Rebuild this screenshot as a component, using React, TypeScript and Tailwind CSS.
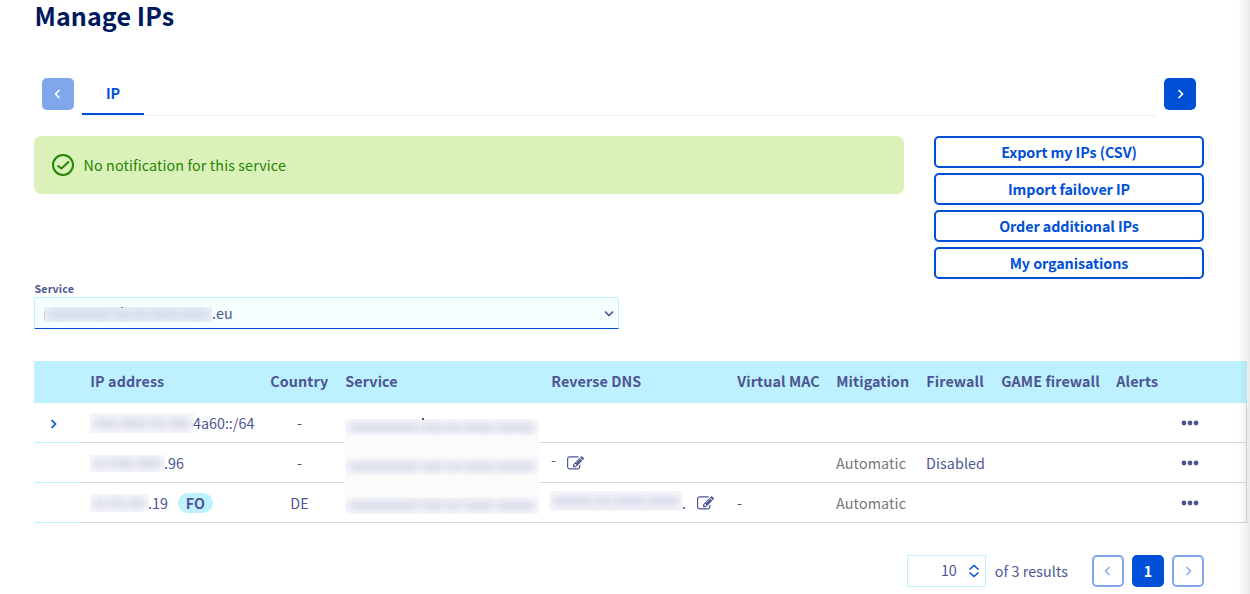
import type { ReactNode } from "react";

type ChevronProps = { className?: string; d?: string; strokeWidth?: number };

function Chevron({ className = "", d = "M6.5 4 10.5 8l-4 4", strokeWidth = 1.7 }: ChevronProps) {
  return (
    <svg viewBox="0 0 16 16" className={`size-4 shrink-0 ${className}`} fill="none" stroke="currentColor" strokeWidth={strokeWidth}>
      <path d={d} />
    </svg>
  );
}

const LEFT = "M9.5 4 5.5 8l4 4";

function EditIcon() {
  return (
    <svg viewBox="0 0 1792 1792" className="size-[17px] shrink-0" fill="currentColor">
      <path d="M888 1184l116-116-152-152-116 116v56h96v96h56zm440-720q-16-16-33 1l-350 350q-17 17-1 33t33-1l350-350q17-17 1-33zm80 594v190q0 119-84.500 203.500t-203.500 84.500h-832q-119 0-203.500-84.500t-84.500-203.500v-832q0-119 84.500-203.500t203.500-84.500h832q63 0 117 25 15 7 18 23 3 17-9 29l-49 49q-14 14-32 8-23-6-45-6h-832q-66 0-113 47t-47 113v832q0 66 47 113t113 47h832q66 0 113-47t47-113v-126q0-13 9-22l64-64q15-15 35-7t20 29zm-96-738l288 288-672 672h-288v-288zm444 132l-92 92-288-288 92-92q28-28 68-28t68 28l152 152q28 28 28 68t-28 68z" />
    </svg>
  );
}

function Dots() {
  return (
    <svg viewBox="0 0 18 6" className="-ml-px h-1.5 w-[18px]" fill="currentColor">
      <circle cx="3" cy="3" r="2.4" />
      <circle cx="9" cy="3" r="2.4" />
      <circle cx="15" cy="3" r="2.4" />
    </svg>
  );
}

function Redacted({ className, segments }: { className: string; segments: number[] }) {
  return (
    <span className={`flex shrink-0 items-center gap-0.5 overflow-hidden px-1 ${className}`}>
      {segments.map((grow, i) => (
        <span key={i} className="h-[9px] basis-0 bg-[#d3d6e8] blur-[4px]" style={{ flexGrow: grow }} />
      ))}
    </span>
  );
}

const actions = ["Export my IPs (CSV)", "Import failover IP", "Order additional IPs", "My organisations"];
const columns = "grid grid-cols-[47px_180px_75px_206px_186px_99px_90px_75px_115px_66px_74px]";
const headers = ["", "IP address", "Country", "Service", "Reverse DNS", "Virtual MAC", "Mitigation", "Firewall", "GAME firewall", "Alerts", ""];

type Row = {
  expand?: boolean;
  ip: ReactNode;
  country: string;
  dns?: ReactNode;
  mac?: string;
  mitigation?: string;
  firewall?: string;
};

const rows: Row[] = [
  {
    expand: true,
    ip: (<><Redacted className="h-5 w-[104px] bg-[#f8f8fb]" segments={[4, 5, 3, 4]} /><span className="-ml-px">4a60::/64</span></>),
    country: "-",
  },
  {
    ip: (<><Redacted className="h-[17px] w-[75px] bg-[#f8f8fb]" segments={[2, 4, 4]} /><span className="-ml-px">.96</span></>),
    country: "-",
    dns: (<><span className="relative -top-[3px] w-4">-</span><EditIcon /></>),
    mitigation: "Automatic",
    firewall: "Disabled",
  },
  {
    ip: (<><Redacted className="h-[18px] w-[59px] bg-[#f8f8fb]" segments={[2, 3, 3]} /><span className="-ml-px">.19</span><span className="ml-[10px] flex h-5 w-[35px] items-center justify-center rounded-full bg-[#bef1ff] font-bold"><span>FO</span></span></>),
    country: "DE",
    dns: (<><Redacted className="relative -top-0.5 -ml-[2px] h-5 w-[134px] bg-[#f8f8fb]" segments={[5, 2, 4, 4]} /><span className="relative -left-px w-[14px]">.</span><EditIcon /></>),
    mac: "-",
    mitigation: "Automatic",
  },
];

function IpTable() {
  return (
    <div className="relative mt-8 w-[1213px]">
      <div className={`${columns} h-[42px] items-center bg-[#bef1ff] pb-0.5 font-bold tracking-[0.1px]`}>
        {headers.map((h, i) => (
          <div key={i} className="pl-[9.300px] whitespace-nowrap">{h}</div>
        ))}
      </div>
      {rows.map((row, i) => (
        <div key={i} className={`${columns} h-10 border-r border-[#d9d9de] [&>div]:flex [&>div]:items-center [&>div]:border-b [&>div]:border-[#d9d9d9] [&>div]:pt-px [&>div]:pl-[9px]`}>
          <div className="border-[#bef1ff]!">{row.expand && <Chevron className="mt-px ml-0.5 text-[#0050d7]" />}</div>
          <div>{row.ip}</div>
          <div className="justify-center pr-[7px]">{row.country}</div>
          <div />
          <div>{row.dns}</div>
          <div>{row.mac}</div>
          <div className="tracking-[0.14px] text-[#757575]">{row.mitigation}</div>
          <div className="tracking-[0.1px]">{row.firewall}</div>
          <div />
          <div />
          <div><Dots /></div>
        </div>
      ))}
      <div className="absolute top-[58px] left-[311px] flex h-[95px] w-[194px] flex-col justify-between bg-[#fbfbfc]">
        {rows.map((_, i) => (
          <Redacted key={i} className="h-[17px] w-full" segments={[9, 3, 2, 4, 5]} />
        ))}
      </div>
      <span className="absolute top-[57px] left-[388px] h-0.5 w-[1.500px] bg-[#4d5592]" />
    </div>
  );
}

export default function App() {
  return (
    <div className="relative h-[594px] w-[1250px] overflow-hidden bg-white pl-[34px] font-['Noto_Sans_CJK_SC','Noto_Sans',sans-serif] text-[14.320px] leading-5 text-[#4d5592]">
      <h1 className="h-[78px] pl-[0.500px] text-[25.060px] leading-[30px] font-bold tracking-[0.08px] text-[#00185e]">Manage IPs</h1>

      <div className="flex h-[38px] w-[1162px] pl-2">
        <button className="flex size-8 items-center justify-center rounded-[5px] bg-[#80a7eb] text-white"><Chevron d={LEFT} /></button>
        <div className="ml-2 flex flex-1 items-start border-b border-[#e5f0f8]">
          <div className="h-[37px] w-[62px] border-b-2 border-[#0050d7] pt-[5px] text-center font-bold tracking-[-0.2px] text-[#0050d7]">IP</div>
        </div>
        <button className="ml-2 flex size-8 items-center justify-center rounded-[5px] bg-[#0050d7] text-white"><Chevron /></button>
      </div>

      <div className="mt-5 flex h-[143px] w-[1170px] items-start justify-between">
        <div className="flex h-[58px] w-[870px] items-center rounded-[7px] bg-[#daf1ba] pl-[18px] text-[#268403]">
          <svg viewBox="0 0 22 22" className="size-[22px]" fill="none" stroke="currentColor" strokeWidth="2">
            <circle cx="11" cy="11" r="10" />
            <path d="m5.500 11.500 4 3L17 7.500" />
          </svg>
          <span className="ml-[9.500px] tracking-[0.11px]">No notification for this service</span>
        </div>
        <div className="flex w-[270px] flex-col gap-[5px]">
          {actions.map((a) => (
            <button key={a} className="flex h-8 items-center justify-center rounded-[5px] border-2 border-[#0050d7] font-bold tracking-[-0.08px] text-[#0050d7]">{a}</button>
          ))}
        </div>
      </div>

      <div className="mt-px h-[17px] pl-[0.500px] text-[10.740px] leading-[17px] font-bold tracking-[0.1px]">Service</div>
      <div className="relative flex h-8 w-[585px] items-center rounded-t-[2px] border border-[#bef1ff] border-b-[#0050d7] bg-[#f5feff] pl-[9px]">
        <span className="absolute top-[13px] left-[9px] h-2 w-px bg-[#f5b7a8]" />
        <span className="absolute top-[9px] left-[86px] h-px w-[1.500px] bg-[#4d5592]" />
        <Redacted className="mt-0.5 h-[15px] w-[168px] bg-[#e9f2f8]" segments={[9, 3, 2, 4, 4]} />
        <span className="tracking-[0.1px]">.eu</span>
        <Chevron d="M4 6.500 8 10.500l4-4" className="mr-[1px] ml-auto" />
      </div>

      <IpTable />

      <div className="mt-8 flex h-8 w-[1170px] items-center justify-end">
        <div className="flex h-8 w-[79px] items-center justify-end border border-[#bef1ff] pr-[3px]">
          <span className="relative -top-px mr-[9px]">10</span>
          <svg viewBox="0 0 16 16" className="size-4 text-[#0050d7]" fill="none" stroke="currentColor" strokeWidth="1.500">
            <path d="m3.500 6.500 4.500-4 4.500 4M3.500 9.500l4.500 4 4.500-4" />
          </svg>
        </div>
        <span className="mr-6 ml-[9px] tracking-[0.07px]">of 3 results</span>
        <div className="flex gap-2">
          <button className="flex size-8 items-center justify-center rounded-[5px] border-2 border-[#80a7eb] text-[#80a7eb]"><Chevron d={LEFT} strokeWidth={1.4} /></button>
          <button className="flex size-8 items-center justify-center rounded-[5px] bg-[#0050d7] font-bold text-white">1</button>
          <button className="flex size-8 items-center justify-center rounded-[5px] border-2 border-[#80a7eb] text-[#80a7eb]"><Chevron strokeWidth={1.4} /></button>
        </div>
      </div>
      <div className="absolute inset-y-0 right-0 w-3 bg-linear-to-r from-transparent to-black/8" />
    </div>
  );
}
